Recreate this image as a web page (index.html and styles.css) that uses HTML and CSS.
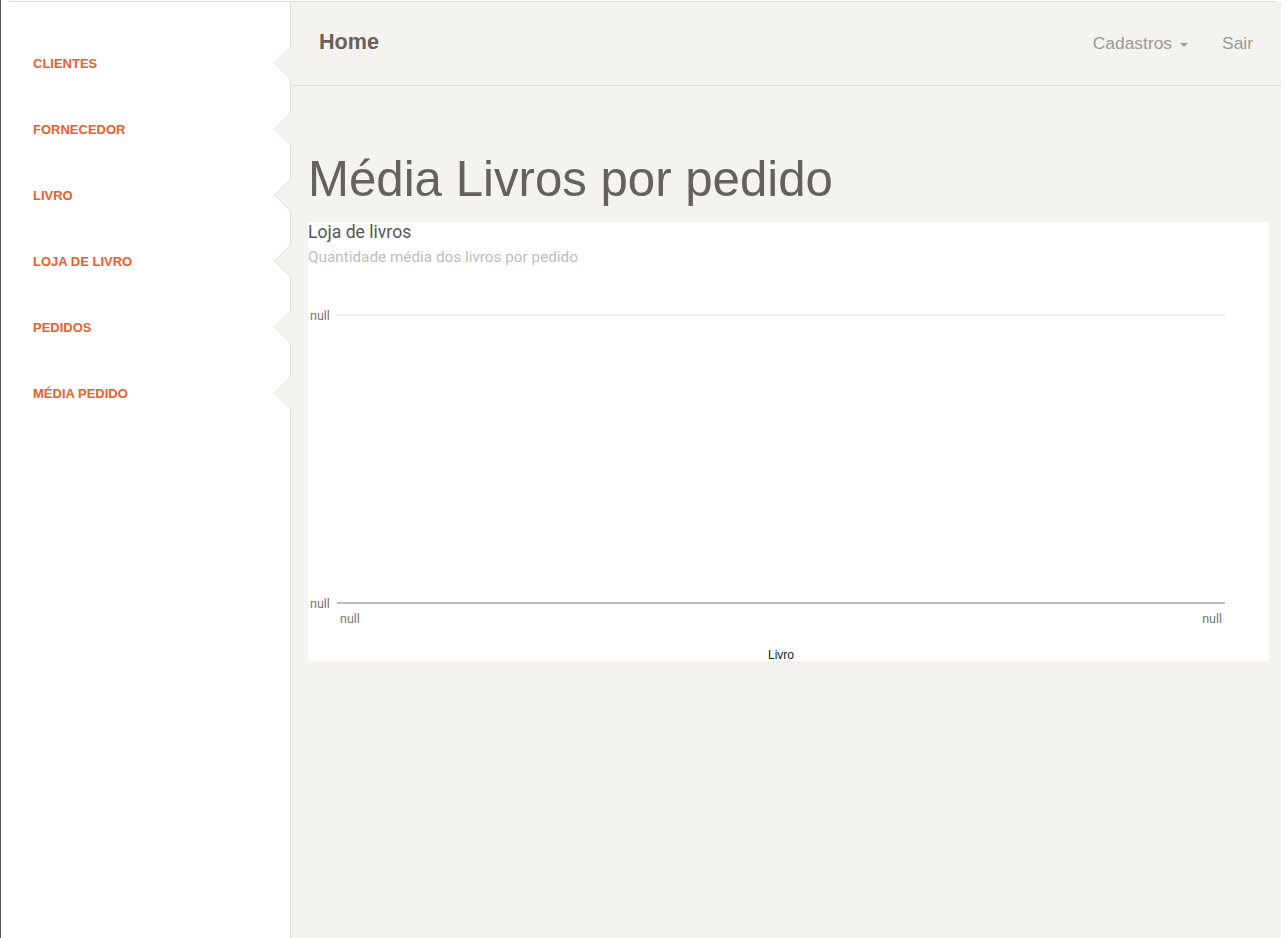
FILE: index.html
```html
<!DOCTYPE html>
<html lang="pt">
<head>
<meta charset="utf-8">
<title>Média Livros por pedido</title>
<link rel="stylesheet" href="styles.css">
</head>
<body>
<div class="page">
  <div class="rule"></div>
  <div class="layout">
    <aside class="sidebar">
      <ul class="nav">
        <li><a href="#">Clientes</a></li>
        <li><a href="#">Fornecedor</a></li>
        <li><a href="#">Livro</a></li>
        <li><a href="#">Loja de Livro</a></li>
        <li><a href="#">Pedidos</a></li>
        <li><a href="#">Média Pedido</a></li>
      </ul>
    </aside>
    <main class="main">
      <header class="navbar">
        <a class="brand" href="#">Home</a>
        <nav class="navlinks">
          <a href="#" class="navlink">Cadastros<span class="caret"></span></a>
          <a href="#" class="navlink">Sair</a>
        </nav>
      </header>
      <section class="content">
        <h1 class="title">Média Livros por pedido</h1>
        <div class="card">
          <div class="card-title">Loja de livros</div>
          <div class="card-sub">Quantidade média dos livros por pedido</div>
          <svg class="chart" width="961" height="394" viewBox="0 0 961 394">
            <line x1="29" y1="48" x2="917" y2="48" stroke="#e6e6e6" stroke-width="1.5"/>
            <text x="2" y="52.5" class="axis">null</text>
            <line x1="29" y1="336" x2="917" y2="336" stroke="#bdbdbd" stroke-width="2"/>
            <text x="2" y="340.5" class="axis">null</text>
            <text x="32" y="356" class="axis">null</text>
            <text x="914" y="356" class="axis" text-anchor="end">null</text>
            <text x="473" y="392" class="axis-title" text-anchor="middle">Livro</text>
          </svg>
        </div>
      </section>
    </main>
  </div>
</div>
</body>
</html>
```
FILE: styles.css
```css
* { box-sizing: border-box; }
html, body { margin: 0; padding: 0; background: #ffffff; }
body { font-family: "Liberation Sans", Arial, sans-serif; }

.page {
  border-left: 1px solid #555555;
  height: 938px;
  overflow: hidden;
  padding-top: 1px;
}
.rule {
  height: 1px;
  background: #dddddd;
  margin: 0 9px 0 8px;
}
.layout {
  display: flex;
  height: 936px;
  margin-right: 4px;
}

/* Sidebar */
.sidebar {
  width: 290px;
  flex: 0 0 290px;
  background: #ffffff;
  border-right: 1px solid #dddddd;
}
.nav {
  list-style: none;
  margin: 0;
  padding: 29px 0 0 0;
}
.nav li {
  position: relative;
  height: 66px;
}
.nav li a {
  display: block;
  padding-left: 32px;
  line-height: 66px;
  font-size: 13px;
  font-weight: 700;
  text-transform: uppercase;
  color: #eb5e28;
  text-decoration: none;
}
.nav li::before,
.nav li::after {
  content: "";
  position: absolute;
  top: 50%;
  margin-top: -18px;
  width: 0;
  height: 0;
  border-top: 17px solid transparent;
  border-bottom: 17px solid transparent;
}
.nav li::before {
  right: -1px;
  border-right: 17px solid #dddddd;
}
.nav li::after {
  right: -2px;
  border-right: 17px solid #f4f3ef;
}

/* Main */
.main {
  flex: 1;
  background: #f4f3ef;
  display: flex;
  flex-direction: column;
}
.navbar {
  height: 84px;
  border-bottom: 1px solid #dddddd;
  display: flex;
  align-items: center;
  justify-content: space-between;
  padding: 0 28px;
}
.brand {
  font-size: 21.6px;
  font-weight: 700;
  color: #66615b;
  text-decoration: none;
  margin-top: -4px;
}
.navlinks {
  display: flex;
  align-items: center;
  gap: 34px;
}
.navlink {
  font-size: 17.4px;
  color: #9a9a9a;
  text-decoration: none;
  display: flex;
  align-items: center;
}
.caret {
  display: inline-block;
  width: 0;
  height: 0;
  margin-left: 8px;
  margin-top: 2px;
  border-top: 4px solid #9a9a9a;
  border-left: 4px solid transparent;
  border-right: 4px solid transparent;
}

.content {
  padding: 66px 11px 0 17px;
}
.title {
  margin: 0 0 16px 0;
  font-size: 49.2px;
  line-height: 54px;
  font-weight: 400;
  color: #66615b;
}
.card {
  background: #ffffff;
  width: 961px;
  height: 439px;
}
.card-title {
  font-family: Roboto, "Liberation Sans", sans-serif;
  font-size: 17.6px;
  line-height: 20px;
  color: #555555;
}
.card-sub {
  font-family: Roboto, "Liberation Sans", sans-serif;
  font-size: 15.3px;
  line-height: 20px;
  color: #bdbdbd;
  margin-top: 5px;
}
.chart {
  display: block;
}
.axis {
  font-family: Roboto, "Liberation Sans", sans-serif;
  font-size: 12.5px;
  fill: #757575;
}
.axis-title {
  font-family: "Liberation Sans", Arial, sans-serif;
  font-size: 12px;
  fill: #222222;
}
```
